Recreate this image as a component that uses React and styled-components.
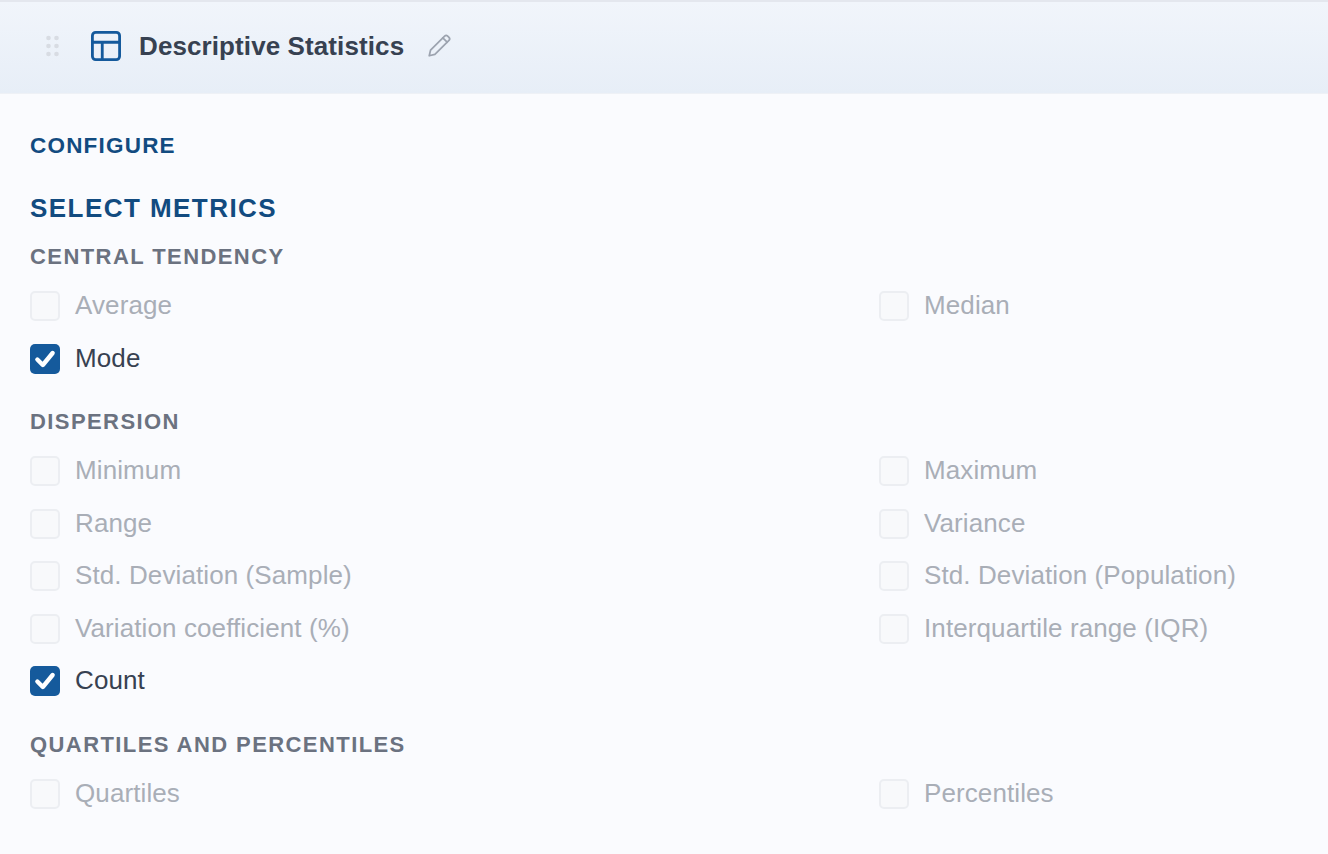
import React from 'react'
import styled, { createGlobalStyle } from 'styled-components'

const GlobalStyle = createGlobalStyle`
  html, body { margin: 0; padding: 0; background: #fafbfe; }
  body { font-family: "Liberation Sans", Arial, sans-serif; }
`

const Page = styled.div`
  width: 1328px;
  height: 854px;
  overflow: hidden;
  background: #fafbfe;
  border-top: 2px solid #e4e7ee;
  box-sizing: border-box;
`

const Header = styled.div`
  height: 92px;
  box-sizing: border-box;
  display: flex;
  align-items: center;
  padding: 0 0 3px 45px;
  background: linear-gradient(180deg, #f1f5fb 0%, #e7eef7 100%);
  border-bottom: 1px solid #eef1f6;
`

const Handle = styled.svg`
  width: 15px;
  height: 22px;
  margin-right: 31px;
  fill: #d8dce3;
`

const TableIcon = styled.svg`
  width: 30px;
  height: 30px;
  margin-right: 18px;
  fill: none;
  stroke: #155a9c;
  stroke-width: 3;
`

const Title = styled.h1`
  margin: 0 22px 0 0;
  font-size: 26px;
  line-height: 32px;
  font-weight: 700;
  letter-spacing: 0.1px;
  color: #374151;
`

const PencilIcon = styled.svg`
  width: 26px;
  height: 26px;
  fill: none;
  stroke: #9ca3af;
  stroke-width: 1.6;
  stroke-linecap: round;
  stroke-linejoin: round;
`

const Body = styled.div`
  padding: 38px 30px 0;
`

const Configure = styled.div`
  font-size: 22.5px;
  line-height: 28px;
  font-weight: 700;
  letter-spacing: 1.2px;
  color: #124b80;
`

const MetricsTitle = styled.h2`
  margin: 32px 0 0;
  font-size: 26px;
  line-height: 32px;
  font-weight: 700;
  letter-spacing: 1.45px;
  color: #124b80;
`

const GroupTitle = styled.h3`
  margin: ${(p) => (p.$first ? '19px' : '23px')} 0 0;
  font-size: 22px;
  line-height: 28px;
  font-weight: 700;
  letter-spacing: 1.42px;
  color: #6b7280;
`

const Grid = styled.div`
  display: grid;
  grid-template-columns: 849px 1fr;
  grid-auto-rows: 52.5px;
  margin-top: 9px;
`

const Metric = styled.label`
  display: flex;
  align-items: center;
  gap: 15px;
  font-size: 26px;
  letter-spacing: 0.1px;
  color: ${(p) => (p.$checked ? '#374151' : '#a9aeb7')};
`

const MetricText = styled.span`
  padding-bottom: 1px;
`

const Box = styled.span`
  width: 30px;
  height: 30px;
  box-sizing: border-box;
  display: flex;
  align-items: center;
  justify-content: center;
  border-radius: 5px;
  background: ${(p) => (p.$checked ? '#155a9c' : '#f8f9fb')};
  border: ${(p) => (p.$checked ? '0' : '2px solid #eceef2')};
`

const Check = styled.svg`
  width: 24px;
  height: 24px;
  fill: none;
  stroke: #ffffff;
  stroke-width: 4;
  stroke-linecap: round;
  stroke-linejoin: round;
`

const groups = [
  {
    title: 'CENTRAL TENDENCY',
    items: [
      ['Average'],
      ['Median'],
      ['Mode', true],
    ],
  },
  {
    title: 'DISPERSION',
    items: [
      ['Minimum'],
      ['Maximum'],
      ['Range'],
      ['Variance'],
      ['Std. Deviation (Sample)'],
      ['Std. Deviation (Population)'],
      ['Variation coefficient (%)'],
      ['Interquartile range (IQR)'],
      ['Count', true],
    ],
  },
  {
    title: 'QUARTILES AND PERCENTILES',
    items: [
      ['Quartiles'],
      ['Percentiles'],
    ],
  },
]

const App = () => {
  return (
    <Page>
      <GlobalStyle />
      <Header>
        <Handle viewBox="0 0 15 22">
          {[3, 11, 19].map((y) => (
            <React.Fragment key={y}>
              <circle cx="3.5" cy={y} r="2.3" />
              <circle cx="11.5" cy={y} r="2.3" />
            </React.Fragment>
          ))}
        </Handle>
        <TableIcon viewBox="0 0 32 32">
          <rect x="1.5" y="1.5" width="29" height="29" rx="3.5" />
          <path d="M2 12h28M12 12v18" />
        </TableIcon>
        <Title>Descriptive Statistics</Title>
        <PencilIcon viewBox="0 0 24 24">
          <path d="M3 21l1.2-5.2L17.2 2.8a2 2 0 0 1 2.8 0l1.2 1.2a2 2 0 0 1 0 2.8L8.2 19.8 3 21z" />
          <path d="M15.5 4.5l4 4" />
        </PencilIcon>
      </Header>
      <Body>
        <Configure>CONFIGURE</Configure>
        <MetricsTitle>SELECT METRICS</MetricsTitle>
        {groups.map((group, i) => (
          <React.Fragment key={group.title}>
            <GroupTitle $first={i === 0}>{group.title}</GroupTitle>
            <Grid>
              {group.items.map(([label, checked]) => (
                <Metric key={label} $checked={checked}>
                  <Box $checked={checked}>
                    {checked && (
                      <Check viewBox="0 0 22 22">
                        <path d="M4 11.5l5 5L18 5.5" />
                      </Check>
                    )}
                  </Box>
                  <MetricText>{label}</MetricText>
                </Metric>
              ))}
            </Grid>
          </React.Fragment>
        ))}
      </Body>
    </Page>
  )
}

export default App
